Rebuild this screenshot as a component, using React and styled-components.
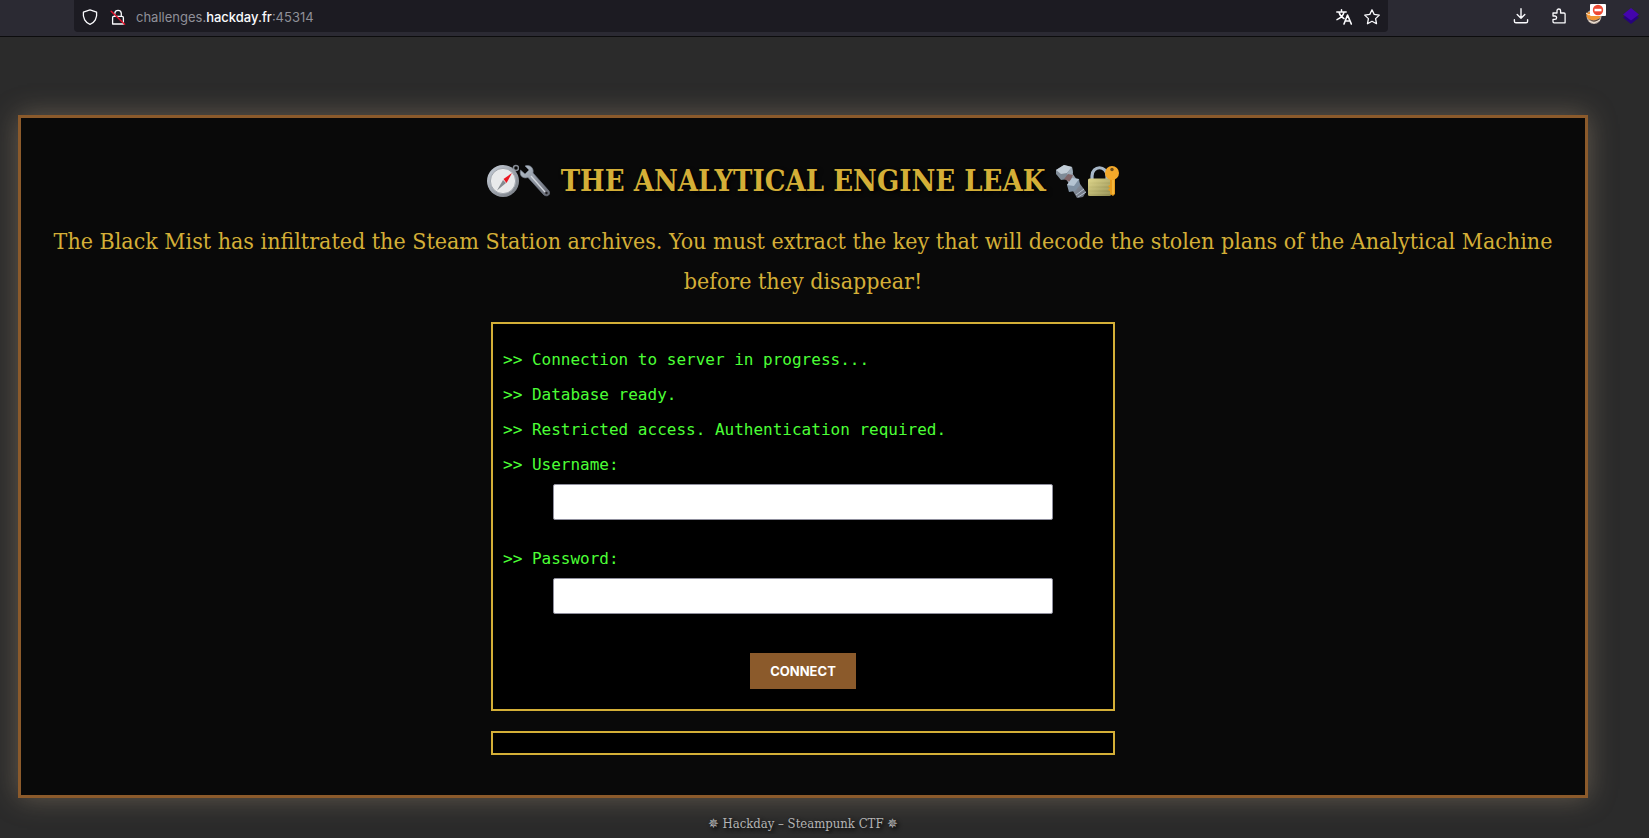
import React from "react";
import styled, { createGlobalStyle } from "styled-components";

const GlobalStyle = createGlobalStyle`
  * { box-sizing: border-box; }
  body {
    margin: 0;
    background: #2b2b2b;
    color: #d4af37;
    font-family: "DejaVu Serif Condensed", "DejaVu Serif", serif;
  }
`;

const Toolbar = styled.header`
  display: flex;
  height: 37px;
  padding: 0 4px 0 74px;
  background: #2b2a33;
  border-bottom: 1px solid #0c0c0d;
`;

const AddressBar = styled.div`
  display: flex;
  align-items: center;
  flex: 1;
  height: 32px;
  padding: 2px 2px 0 7px;
  border-radius: 0 0 4px 4px;
  background: #1c1b22;
`;

const IconButton = styled.button`
  display: flex;
  align-items: center;
  justify-content: center;
  width: ${(p) => p.$width || 28}px;
  height: 32px;
  padding: 0;
  border: 0;
  background: none;
  color: #fbfbfe;
`;

const Address = styled.a`
  flex: 1;
  color: #8f8f98;
  font: 13px/20px Inter, sans-serif;
  text-decoration: none;
`;

const Domain = styled.span`
  color: #fbfbfe;
  font-weight: 500;
`;

const Extensions = styled.nav`
  display: flex;
  gap: 4px;
  margin-left: 115px;
`;

const Panel = styled.main`
  margin: 78px 61px 0 18px;
  padding: 38px 32px 40px;
  border: 3px solid #8b5a2b;
  background: #090909;
  box-shadow: 0 0 26px rgba(200, 175, 140, 0.36);
  text-align: center;
`;

const Title = styled.h1`
  display: flex;
  align-items: center;
  justify-content: center;
  gap: 10px;
  margin: 0;
  font-size: 29px;
  line-height: 50px;
  text-shadow: 2px 2px 4px #000;
`;

const Emblems = styled.span`
  display: flex;
`;

const Intro = styled.p`
  margin: 15px 0 21px;
  font-size: 23px;
  line-height: 40px;
`;

const Box = styled.section`
  max-width: 624px;
  margin: 0 auto;
  padding: 18px 10px 20px;
  border: 2px solid #d4af37;
  background: #000;
  text-align: left;
`;

const ResponseBox = styled(Box)`
  margin-top: 20px;
  padding: 10px;
`;

const Line = styled.p`
  margin: 0;
  color: #4cff36;
  font: 16px/35px "DejaVu Sans Mono", monospace;
`;

const Field = styled.input`
  display: block;
  width: 100%;
  max-width: 500px;
  height: 36px;
  margin: 2px auto 21px;
  padding: 10px;
  border: 1px solid #8f8f9d;
  border-radius: 2px;
  background: #fff;
`;

const ConnectButton = styled.button`
  display: block;
  height: 36px;
  margin: 39px auto 0;
  padding: 0 20px;
  border: 0;
  background: #8b5a2b;
  color: #fff;
  font: bold 13px/16px Inter, sans-serif;
`;

const Footer = styled.footer`
  margin: 16px 61px 0 18px;
  color: #b4b4b4;
  font-size: 13px;
  line-height: 20px;
  text-align: center;
  text-shadow: 2px 2px 4px #000;
`;

const Svg = ({ size = 16, children, ...rest }) => (
  <svg width={size} height={size} viewBox="0 0 16 16" fill="none" stroke="currentColor" strokeWidth="1.3" strokeLinejoin="round" strokeLinecap="round" aria-hidden="true" {...rest}>
    {children}
  </svg>
);

const Shield = () => (
  <Svg><path d="M8 .9 14.6 3.2C15.4 9.1 12.6 13.8 8 15.3 3.4 13.8.6 9.1 1.4 3.2Z" /></Svg>
);
const InsecureLock = () => (
  <Svg>
    <path d="M4.8 7V4.2a3.3 3.3 0 0 1 6.5 0V7M3.6 7.3H12a1.4 1.4 0 0 1 1.4 1.4V15H2.6V8.5a1.2 1.2 0 0 1 1-1.2Z" />
    <path d="m1.2 2.2 13.4 13" stroke="#e2142d" strokeWidth="1.5" />
  </Svg>
);
const Translate = () => (
  <Svg>
    <path d="M.8 3h9.4M5.5.8V3M3 3.3c.8 3 2.4 5 5 6.4M8 3.3C7.2 6.6 4.8 9 1 10.6" strokeWidth="1.5" />
    <path d="m8 15 3.5-9L15.3 15M9.2 12h4.8" strokeWidth="1.6" />
  </Svg>
);
const Star = () => (
  <Svg><path d="m8 .8 2.2 4.6 5.1.7-3.7 3.5.9 5.1L8 12.3l-4.5 2.4.9-5.1L.7 6.1l5.1-.7Z" /></Svg>
);
const Download = () => (
  <Svg><path d="M8 .8v9.4M4.2 6.6 8 10.3l3.8-3.7M1.4 11.7v1.5c0 1 .7 1.6 1.6 1.6h10c1 0 1.6-.7 1.6-1.6v-1.5" strokeWidth="1.4" /></Svg>
);
const Puzzle = () => (
  <Svg><path d="M2 5h4V2.8a1.8 1.8 0 0 1 3.6 0V5H13c.7 0 1.1.4 1.1 1.1v8.7H3.2c-.8 0-1.2-.4-1.2-1.2v-2.2h1.9a1.7 1.7 0 0 0 0-3.4H2Z" /></Svg>
);
const Mascot = () => (
  <svg width="22" height="24" viewBox="0 0 22 24" aria-hidden="true">
    <ellipse cx="9" cy="12.5" rx="7.5" ry="7.5" fill="#b9aaa0" />
    <path d="M1 9 5 8l11 3c-1 6-12 7-14 2Z" fill="#f0932f" />
    <path d="M4 15c3 2 7 2 11-1-1 4-7 5-11 1Z" fill="#5b4638" />
    <path d="m1 9 3 2 3-2m-3 8 5 2 6-3" stroke="#f4e9db" fill="none" />
    <rect x="5" y="0" width="16" height="12" rx="1" fill="#fff" />
    <circle cx="13" cy="6" r="5.2" fill="#ee4932" />
    <path d="M9.5 4.8h7v2.5h-7z" fill="#fff" />
  </svg>
);
const Layers = () => (
  <svg width="16" height="16" viewBox="0 0 16 16" aria-hidden="true">
    <path d="m0 9.5 8-5 8 5L8 16Z" fill="#26027c" />
    <path d="m0 6.5 8-6.5 8 6.5-8 6Z" fill="#4404ad" />
  </svg>
);

const Emblem = ({ label, children }) => (
  <svg width="32" height="34" viewBox="0 0 32 34" role="img" aria-label={label}>{children}</svg>
);
const Metal = ({ id, from, to }) => (
  <defs>
    <linearGradient id={id} x1="0" y1="0" x2="1" y2="1">
      <stop offset="0" stopColor={from} />
      <stop offset="1" stopColor={to} />
    </linearGradient>
  </defs>
);
const Compass = () => (
  <Emblem label="Compass">
    <Metal id="rim" from="#c9d0da" to="#72777e" />
    <circle cx="29" cy="4" r="2.5" fill="none" stroke="#858b94" strokeWidth="1.5" />
    <circle cx="16" cy="17" r="16" fill="url(#rim)" />
    <circle cx="16" cy="17" r="12.6" fill="#e9eaeb" stroke="#a2a7ae" />
    <path d="M10 26.5 16 16l3 3Z" fill="#868b90" />
    <path d="m25 9-8.5 6 3 4Z" fill="#eb1620" />
  </Emblem>
);
const Wrench = () => (
  <Emblem label="Wrench">
    <Metal id="steel" from="#b7c2ce" to="#666872" />
    <path d="M6 2c6-2 9 3 8 7l16 18c2 4-2 6-5 4L9 13.5C4 15 0 12 1.500 6l4.500 4 4-4Z" fill="url(#steel)" stroke="#737b88" strokeWidth=".7" />
    <path d="m12 12 14 16" stroke="#d2d7dd" strokeWidth="1.3" />
    <circle cx="27.500" cy="29" r="1.200" fill="#202023" />
  </Emblem>
);
const Bolt = () => (
  <Emblem label="Nut and bolt">
    <Metal id="bolt" from="#aab5c0" to="#666b78" />
    <path d="m10 13 7-4 14 19-3 5-6 1Z" fill="url(#bolt)" />
    <path d="M1 6 9 1l8 2 1 6-5 6-7 1-5-6Z" fill="#7f8b97" />
    <path d="m1 6 8-5 8 2-5 6-6 1Z" fill="#c2cdd7" />
    <path d="m12 9 5-6 1 6-5 6Z" fill="#9daab6" />
    <path d="m9 15 4-5 5 1-3 7Z" fill="#81676a" />
    <path d="m12 21 5-7 7 1 1 6-5 6-6 1Z" fill="#8192a4" />
    <path d="m12 21 5-7 7 1-5 7Z" fill="#b5c4d2" />
    <path d="m21 31 8-6m-6 8 8-5" stroke="#b5c1ce" />
  </Emblem>
);
const LockKey = () => (
  <Emblem label="Closed lock with key">
    <Metal id="brass" from="#ded589" to="#8d8951" />
    <path d="M5 17v-5C5 1 20 1 20 12v5" fill="none" stroke="#a7b7c8" strokeWidth="3.200" />
    <rect x="1" y="14.500" width="23" height="17.500" rx="1.500" fill="url(#brass)" />
    <path d="M2 17h21M2 21h21M2 25h21M2 29h21" stroke="#e5df9b" strokeOpacity=".3" />
    <path d="M23 14h5v16l-2 2-3-2v-3l-2-1 2-2-2-2 2-1Z" fill="#e99c1c" />
    <circle cx="25" cy="9" r="7" fill="#f4a92a" />
    <path d="M26 16v14" stroke="#ffd05a" />
    <circle cx="25" cy="5.500" r="1.700" fill="#6c4b1a" />
  </Emblem>
);

export default function App() {
  return (
    <>
      <GlobalStyle />
      <Toolbar>
        <AddressBar>
          <IconButton $width={18} aria-label="Tracking protection"><Shield /></IconButton>
          <IconButton $width={37} aria-label="Connection not secure"><InsecureLock /></IconButton>
          <Address href="#top">challenges.<Domain>hackday.fr</Domain>:45314</Address>
          <IconButton aria-label="Translate page"><Translate /></IconButton>
          <IconButton aria-label="Bookmark page"><Star /></IconButton>
        </AddressBar>
        <Extensions aria-label="Browser tools">
          <IconButton $width={36} aria-label="Downloads"><Download /></IconButton>
          <IconButton $width={32} aria-label="Extensions"><Puzzle /></IconButton>
          <IconButton $width={34} aria-label="Blocker"><Mascot /></IconButton>
          <IconButton aria-label="Layers"><Layers /></IconButton>
        </Extensions>
      </Toolbar>
      <Panel id="top">
        <Title>
          <Emblems><Compass /><Wrench /></Emblems>
          THE ANALYTICAL ENGINE LEAK
          <Emblems><Bolt /><LockKey /></Emblems>
        </Title>
        <Intro>
          The Black Mist has infiltrated the Steam Station archives. You must extract the key that will decode the stolen plans of the Analytical Machine before they disappear!
        </Intro>
        <Box>
          <Line>&gt;&gt; Connection to server in progress...</Line>
          <Line>&gt;&gt; Database ready.</Line>
          <Line>&gt;&gt; Restricted access. Authentication required.</Line>
          <form onSubmit={(e) => e.preventDefault()}>
            <Line as="label" htmlFor="username">&gt;&gt; Username:</Line>
            <Field id="username" type="text" />
            <Line as="label" htmlFor="password">&gt;&gt; Password:</Line>
            <Field id="password" type="password" />
            <ConnectButton type="submit">CONNECT</ConnectButton>
          </form>
        </Box>
        <ResponseBox aria-label="Server response" />
      </Panel>
      <Footer>✵ Hackday – Steampunk CTF ✵</Footer>
    </>
  );
}
